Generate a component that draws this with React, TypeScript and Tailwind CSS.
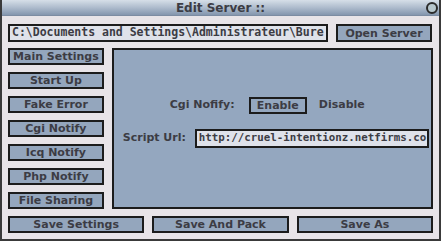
const menu = ['Main Settings', 'Start Up', 'Fake Error', 'Cgi Notify', 'Icq Notify', 'Php Notify', 'File Sharing'];

const btn =
    'h-[17px] border-2 border-[#1c1c1c] bg-[#94a6bd] text-[#3c3c44] flex items-center justify-center text-[11px] font-bold leading-none';

export default function App() {
    return (
        <div
            className="w-[441px] h-[241px] bg-[#e8e4e8] border-2 border-t-0 border-[#3a3a3a] flex flex-col overflow-hidden"
            style={{ fontFamily: "'DejaVu Sans', Verdana, sans-serif" }}
        >
            {/* Title bar */}
            <div className="h-[16px] -mx-[2px] relative flex items-center justify-center bg-gradient-to-b from-[#d6dfe8] via-[#aebccd] to-[#8496ae] border-b border-[#7c8ca2]">
                <span className="text-[12px] font-bold text-[#3c3c44] leading-none">Edit Server ::</span>
                <div className="absolute right-[3px] top-[2px] w-[12px] h-[12px] rounded-full border-2 border-[#2a2a2a] bg-[#b6c6cc]" />
            </div>

            {/* Path row */}
            <div className="flex gap-[8px] pl-[6px] pr-[7px] mt-[8px]">
                <div
                    className="w-[320px] h-[18px] border-2 border-[#1c1c1c] bg-[#dfe2ea] text-[#3c3c44] flex items-center pl-[2px] overflow-hidden whitespace-nowrap text-[11.5px] font-bold leading-none"
                    style={{ fontFamily: "'DejaVu Sans Mono', monospace" }}
                >
                    C:\Documents and Settings\Administrateur\Bure
                </div>
                <div className={btn + ' w-[96px] h-[18px] text-[11.5px]'}>Open Server</div>
            </div>

            {/* Middle */}
            <div className="flex gap-[8px] pl-[6px] pr-[6px] mt-[6px]">
                <div className="flex flex-col gap-[7px] w-[96px]">
                    {menu.map((m) => (
                        <div key={m} className={btn}>
                            {m}
                        </div>
                    ))}
                </div>
                <div className="w-[322px] h-[161px] border-2 border-[#1c1c1c] bg-[#94a7bf] flex flex-col">
                    <div className="flex items-center mt-[47px] h-[17px]">
                        <span className="ml-[56px] w-[79px] text-[11px] font-bold text-[#3c3c44]">Cgi Nofify:</span>
                        <div className="w-[58px] h-[17px] border-2 border-[#1c1c1c] flex items-center justify-center text-[11px] font-bold text-[#3c3c44] leading-none">
                            Enable
                        </div>
                        <span className="ml-[12px] text-[11px] font-bold text-[#3c3c44]">Disable</span>
                    </div>
                    <div className="flex items-center mt-[15px] h-[19px]">
                        <span className="ml-[9px] w-[72px] text-[11px] font-bold text-[#3c3c44]">Script Url:</span>
                        <div
                            className="w-[234px] h-[19px] border-2 border-[#1c1c1c] bg-[#dfe2ea] text-[#3c3c44] flex items-center pl-[2px] overflow-hidden whitespace-nowrap text-[10.8px] font-bold leading-none"
                            style={{ fontFamily: "'DejaVu Sans Mono', monospace" }}
                        >
                            http://cruel-intentionz.netfirms.co
                        </div>
                    </div>
                </div>
            </div>

            {/* Save row */}
            <div className="flex gap-[8px] pl-[6px] pr-[6px] mt-[7px]">
                <div className={btn + ' flex-1'}>Save Settings</div>
                <div className={btn + ' flex-1'}>Save And Pack</div>
                <div className={btn + ' flex-1'}>Save As</div>
            </div>
        </div>
    );
}
